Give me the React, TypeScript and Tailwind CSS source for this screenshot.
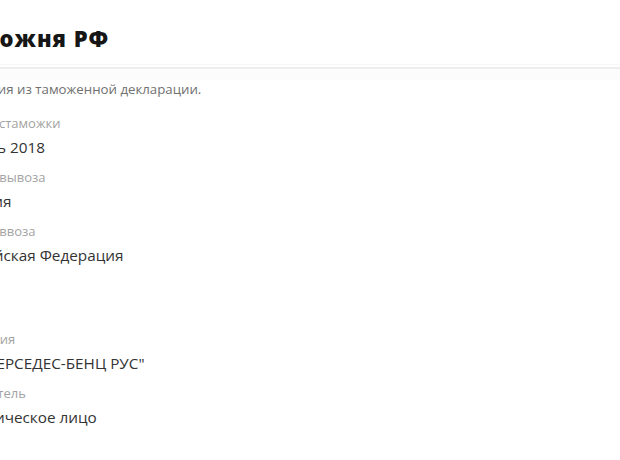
import React from "react";

const rows: { label: string; value: string }[] = [
  { label: "Дата растаможки", value: "Январь 2018" },
  { label: "Страна вывоза", value: "Австрия" },
  { label: "Страна ввоза", value: "Российская Федерация" },
  { label: "", value: "" },
  { label: "Компания", value: "АО \"МЕРСЕДЕС-БЕНЦ РУС\"" },
  { label: "Получатель", value: "Юридическое лицо" },
];

export default function App() {
  return (
    <div
      className="w-full min-h-[460px] bg-white overflow-hidden"
      style={{ fontFamily: '"Open Sans", "Noto Sans", sans-serif' }}
    >
      <div className="h-[64px] pt-[24px]">
        <h1 className="-ml-[49px] text-[22px] leading-[28px] font-extrabold tracking-[1px] text-[#161616] whitespace-nowrap">
          Таможня РФ
        </h1>
      </div>
      <div className="h-[1px] bg-[#f6f6f6]" />
      <div className="h-[2px] bg-white" />
      <div className="h-[2px] bg-[#eeeeee]" />
      <div className="h-[11px] bg-[#fcfcfc]" />
      <div className="-ml-[49px]">
        <p className="text-[13.25px] leading-[18px] text-[#707070] whitespace-nowrap">
          Сведения из таможенной декларации.
        </p>
        <div className="mt-[17px] flex flex-col">
          {rows.map((r, i) => (
            <div key={i} className="h-[54px] flex flex-col">
              <div className="h-[16px] text-[13px] leading-[16px] text-[#a3a3a3] whitespace-nowrap">
                {r.label}
              </div>
              <div className="mt-[6px] h-[20px] text-[15.3px] leading-[20px] text-[#333] whitespace-nowrap">
                {r.value}
              </div>
            </div>
          ))}
        </div>
      </div>
    </div>
  );
}
